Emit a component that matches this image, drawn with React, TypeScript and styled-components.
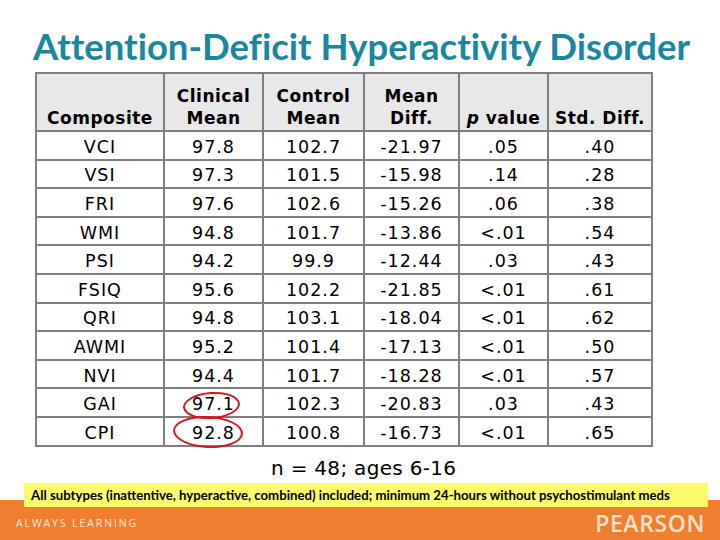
import React from 'react';
import styled, { createGlobalStyle } from 'styled-components';

const GlobalStyle = createGlobalStyle`
  html, body {
    margin: 0;
    padding: 0;
    background: #ffffff;
  }
`;

interface Row {
  name: string;
  clinical: string;
  control: string;
  diff: string;
  p: string;
  std: string;
  circle?: 'small' | 'large';
}

const rows: Row[] = [
  { name: 'VCI', clinical: '97.8', control: '102.7', diff: '-21.97', p: '.05', std: '.40' },
  { name: 'VSI', clinical: '97.3', control: '101.5', diff: '-15.98', p: '.14', std: '.28' },
  { name: 'FRI', clinical: '97.6', control: '102.6', diff: '-15.26', p: '.06', std: '.38' },
  { name: 'WMI', clinical: '94.8', control: '101.7', diff: '-13.86', p: '<.01', std: '.54' },
  { name: 'PSI', clinical: '94.2', control: '99.9', diff: '-12.44', p: '.03', std: '.43' },
  { name: 'FSIQ', clinical: '95.6', control: '102.2', diff: '-21.85', p: '<.01', std: '.61' },
  { name: 'QRI', clinical: '94.8', control: '103.1', diff: '-18.04', p: '<.01', std: '.62' },
  { name: 'AWMI', clinical: '95.2', control: '101.4', diff: '-17.13', p: '<.01', std: '.50' },
  { name: 'NVI', clinical: '94.4', control: '101.7', diff: '-18.28', p: '<.01', std: '.57' },
  { name: 'GAI', clinical: '97.1', control: '102.3', diff: '-20.83', p: '.03', std: '.43', circle: 'small' },
  { name: 'CPI', clinical: '92.8', control: '100.8', diff: '-16.73', p: '<.01', std: '.65', circle: 'large' },
];

const colWidths = [128, 99, 101, 95, 89, 104];

const Slide = styled.div`
  width: 720px;
  height: 540px;
  display: flex;
  flex-direction: column;
  overflow: hidden;
  font-family: 'DejaVu Sans', Verdana, sans-serif;
`;

const Title = styled.h1`
  margin: 26px 0 0 33px;
  font-family: Lato, 'Open Sans', sans-serif;
  font-weight: 700;
  font-size: 36.5px;
  line-height: 40px;
  font-variant-ligatures: none;
  color: #1a87a0;
  white-space: nowrap;
`;

const Table = styled.table`
  margin: 6px 0 0 35px;
  border-collapse: collapse;
  table-layout: fixed;
  width: 616px;
  color: #000;
`;

const HeadRow = styled.tr`
  height: 58px;
  background: #e8e8e8;
`;

const BodyRow = styled.tr`
  height: 28.6px;
  background: #ffffff;
`;

const HeadCell = styled.th`
  border: 2px solid #7f7f7f;
  padding: 0 0 1px;
  vertical-align: bottom;
  text-align: center;
  font-size: 17px;
  line-height: 22px;
  font-weight: 700;
  letter-spacing: 0.5px;
  white-space: nowrap;
`;

const Cell = styled.td`
  position: relative;
  border: 2px solid #7f7f7f;
  padding: 3px 0 0;
  text-align: center;
  vertical-align: middle;
  font-size: 17.5px;
  line-height: 22px;
  letter-spacing: 1px;
`;

const Ring = styled.span<{ $size: 'small' | 'large' }>`
  position: absolute;
  border: 2.5px solid #d8171b;
  border-radius: 50%;
  pointer-events: none;
  left: ${({ $size }) => ($size === 'small' ? '18px' : '8px')};
  top: ${({ $size }) => ($size === 'small' ? '3px' : '-2px')};
  width: ${({ $size }) => ($size === 'small' ? '53px' : '66px')};
  height: ${({ $size }) => ($size === 'small' ? '23px' : '28px')};
  transform: rotate(${({ $size }) => ($size === 'small' ? '-4deg' : '3deg')});
`;

const Note = styled.div`
  margin: 9px 0 0 271px;
  font-size: 20px;
  line-height: 24px;
  letter-spacing: 0.3px;
  color: #000;
`;

const Bottom = styled.div`
  margin-top: auto;
  height: 57px;
  display: flex;
  flex-direction: column;
  background: linear-gradient(to bottom, #ffffff 17px, #ef7f2f 17px);
`;

const Highlight = styled.div`
  margin-left: 24px;
  width: 684px;
  height: 24px;
  box-sizing: border-box;
  padding-left: 7px;
  background: #fbfb6c;
  font-family: Lato, 'Open Sans', sans-serif;
  font-weight: 700;
  font-size: 13.2px;
  line-height: 24px;
  color: #000;
  white-space: nowrap;
`;

const FooterBar = styled.div`
  flex: 1;
  display: flex;
  align-items: center;
  justify-content: space-between;
  padding: 0 15px 8px 16px;
`;

const Tagline = styled.span`
  font-family: 'Open Sans', sans-serif;
  font-size: 10.5px;
  letter-spacing: 1.9px;
  color: #fde4d2;
`;

const Brand = styled.span`
  font-family: 'Open Sans', sans-serif;
  font-weight: 600;
  font-size: 23px;
  letter-spacing: 0.6px;
  color: #fde1cc;
`;

export default function App() {
  return (
    <>
      <GlobalStyle />
      <Slide>
        <Title>Attention-Deficit Hyperactivity Disorder</Title>
        <Table>
          <colgroup>
            {colWidths.map((w, i) => (
              <col key={i} style={{ width: w }} />
            ))}
          </colgroup>
          <thead>
            <HeadRow>
              <HeadCell>Composite</HeadCell>
              <HeadCell>
                Clinical
                <br />
                Mean
              </HeadCell>
              <HeadCell>
                Control
                <br />
                Mean
              </HeadCell>
              <HeadCell>
                Mean
                <br />
                Diff.
              </HeadCell>
              <HeadCell>
                <i>p</i> value
              </HeadCell>
              <HeadCell>Std. Diff.</HeadCell>
            </HeadRow>
          </thead>
          <tbody>
            {rows.map((r) => (
              <BodyRow key={r.name}>
                <Cell>{r.name}</Cell>
                <Cell>
                  {r.clinical}
                  {r.circle && <Ring $size={r.circle} />}
                </Cell>
                <Cell>{r.control}</Cell>
                <Cell>{r.diff}</Cell>
                <Cell>{r.p}</Cell>
                <Cell>{r.std}</Cell>
              </BodyRow>
            ))}
          </tbody>
        </Table>
        <Note>n = 48; ages 6-16</Note>
        <Bottom>
          <Highlight>
            All subtypes (inattentive, hyperactive, combined) included; minimum 24-hours without psychostimulant meds
          </Highlight>
          <FooterBar>
            <Tagline>ALWAYS LEARNING</Tagline>
            <Brand>PEARSON</Brand>
          </FooterBar>
        </Bottom>
      </Slide>
    </>
  );
}
